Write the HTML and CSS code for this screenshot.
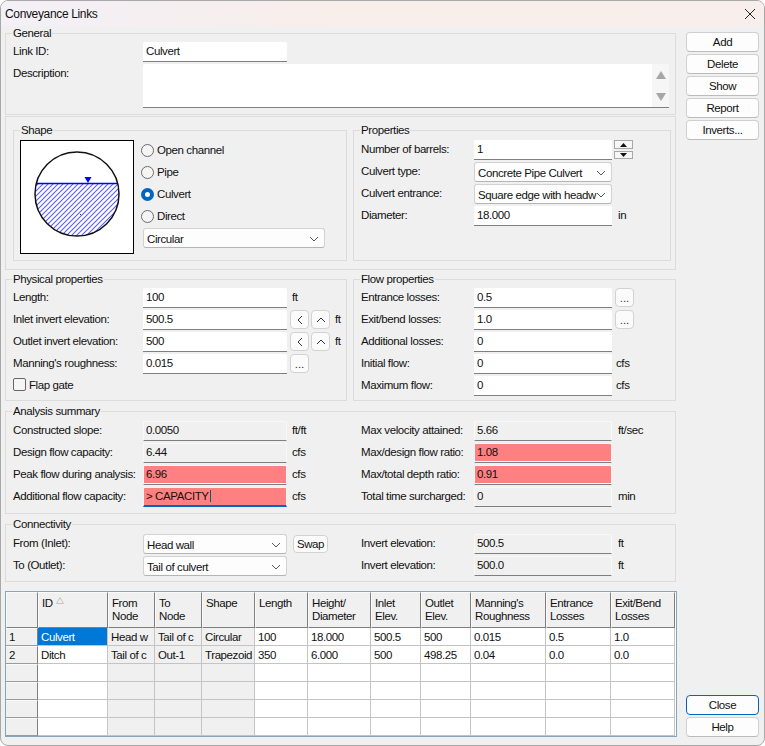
FILE: index.html
```html
<!DOCTYPE html>
<html lang="en">
<head>
<meta charset="utf-8">
<title>Conveyance Links</title>
<link rel="stylesheet" href="styles.css">
</head>
<body>
<div class="window">
  <header class="titlebar">
    <span class="title">Conveyance Links</span>
    <svg class="close-x" width="12" height="12" viewBox="0 0 12 12"><path d="M1 1L11 11M11 1L1 11" stroke="#222" stroke-width="1" fill="none"/></svg>
  </header>
  <div class="content">
    <main class="main">
      <fieldset class="group general">
        <legend>General</legend>
        <div class="row lbl-wide"><span class="label">Link ID:</span><div class="field">Culvert</div></div>
        <div class="row lbl-wide"><span class="label">Description:</span>
          <div class="field memo">
            <div class="memo-scroll">
              <svg width="10" height="8" viewBox="0 0 10 8"><path d="M5 0L10 8H0Z" fill="#a6a6a6"/></svg>
              <svg width="10" height="8" viewBox="0 0 10 8"><path d="M0 0H10L5 8Z" fill="#a6a6a6"/></svg>
            </div>
          </div>
        </div>
      </fieldset>

      <div class="frame">
        <fieldset class="group shape">
          <legend>Shape</legend>
          <div class="shape-body">
            <div class="figure">
              <svg width="112" height="112" viewBox="0 0 112 112">
                <defs>
                  <pattern id="hatch" patternUnits="userSpaceOnUse" width="5" height="5">
                    <path d="M-1 1L1 -1M0 5L5 0M4 6L6 4" stroke="#5a5aff" stroke-width="1.1" fill="none"/>
                  </pattern>
                </defs>
                <path d="M15.3 42.5H96.7A42 42 0 1 1 15.3 42.5Z" fill="url(#hatch)"/>
                <path d="M15 42.5H97" stroke="#0000ff" stroke-width="1.5" fill="none"/>
                <path d="M63.5 36H70.5L67 42Z" fill="#0000ff"/>
                <rect x="59" y="73" width="1" height="1" fill="#333"/>
                <circle cx="56" cy="53" r="42" fill="none" stroke="#111" stroke-width="1.5"/>
              </svg>
            </div>
            <div class="shape-options">
              <div class="radio-row"><span class="radio"></span><span>Open channel</span></div>
              <div class="radio-row"><span class="radio"></span><span>Pipe</span></div>
              <div class="radio-row"><span class="radio checked"></span><span>Culvert</span></div>
              <div class="radio-row"><span class="radio"></span><span>Direct</span></div>
              <div class="select select-shape"><span>Circular</span><svg class="chev" width="10" height="6" viewBox="0 0 10 6"><path d="M1 1L5 5L9 1" stroke="#555" fill="none"/></svg></div>
            </div>
          </div>
        </fieldset>
        <fieldset class="group properties">
          <legend>Properties</legend>
          <div class="row lbl-narrow"><span class="label">Number of barrels:</span><div class="field f-narrow">1</div>
            <div class="spinner">
              <span class="spin spin-up"><svg width="7" height="4" viewBox="0 0 7 4"><path d="M3.5 0L7 4H0Z" fill="#111"/></svg></span>
              <span class="spin spin-down"><svg width="7" height="4" viewBox="0 0 7 4"><path d="M0 0H7L3.5 4Z" fill="#111"/></svg></span>
            </div>
          </div>
          <div class="row lbl-narrow"><span class="label">Culvert type:</span><div class="select f-narrow"><span>Concrete Pipe Culvert</span><svg class="chev" width="10" height="6" viewBox="0 0 10 6"><path d="M1 1L5 5L9 1" stroke="#555" fill="none"/></svg></div></div>
          <div class="row lbl-narrow"><span class="label">Culvert entrance:</span><div class="select f-narrow"><span>Square edge with headw</span><svg class="chev" width="10" height="6" viewBox="0 0 10 6"><path d="M1 1L5 5L9 1" stroke="#555" fill="none"/></svg></div></div>
          <div class="row lbl-narrow"><span class="label">Diameter:</span><div class="field f-narrow">18.000</div><span class="unit unit-far">in</span></div>
        </fieldset>
      </div>

      <div class="pair">
        <fieldset class="group physical">
          <legend>Physical properties</legend>
          <div class="row lbl-wide"><span class="label">Length:</span><div class="field">100</div><span class="unit">ft</span></div>
          <div class="row lbl-wide"><span class="label">Inlet invert elevation:</span><div class="field">500.5</div>
            <button class="btn-mini first"><svg width="8" height="10" viewBox="0 0 8 10"><path d="M6 1L2 5L6 9" stroke="#333" fill="none"/></svg></button>
            <button class="btn-mini"><svg width="10" height="8" viewBox="0 0 10 8"><path d="M1 6L5 2L9 6" stroke="#333" fill="none"/></svg></button>
            <span class="unit">ft</span></div>
          <div class="row lbl-wide"><span class="label">Outlet invert elevation:</span><div class="field">500</div>
            <button class="btn-mini first"><svg width="8" height="10" viewBox="0 0 8 10"><path d="M6 1L2 5L6 9" stroke="#333" fill="none"/></svg></button>
            <button class="btn-mini"><svg width="10" height="8" viewBox="0 0 10 8"><path d="M1 6L5 2L9 6" stroke="#333" fill="none"/></svg></button>
            <span class="unit">ft</span></div>
          <div class="row lbl-wide"><span class="label">Manning's roughness:</span><div class="field">0.015</div><button class="btn-mini first">...</button></div>
          <div class="check-row"><span class="check"></span><span>Flap gate</span></div>
        </fieldset>
        <fieldset class="group flow">
          <legend>Flow properties</legend>
          <div class="row lbl-narrow"><span class="label">Entrance losses:</span><div class="field f-narrow">0.5</div><button class="btn-mini first">...</button></div>
          <div class="row lbl-narrow"><span class="label">Exit/bend losses:</span><div class="field f-narrow">1.0</div><button class="btn-mini first">...</button></div>
          <div class="row lbl-narrow"><span class="label">Additional losses:</span><div class="field f-narrow">0</div></div>
          <div class="row lbl-narrow"><span class="label">Initial flow:</span><div class="field f-narrow">0</div><span class="unit unit-near">cfs</span></div>
          <div class="row lbl-narrow"><span class="label">Maximum flow:</span><div class="field f-narrow">0</div><span class="unit unit-near">cfs</span></div>
        </fieldset>
      </div>

      <fieldset class="group analysis">
        <legend>Analysis summary</legend>
        <div class="two-col">
          <div class="row lbl-wide"><span class="label">Constructed slope:</span><div class="field readonly">0.0050</div><span class="unit">ft/ft</span></div>
          <div class="row lbl-narrow"><span class="label">Max velocity attained:</span><div class="field readonly f-narrow">5.66</div><span class="unit unit-far">ft/sec</span></div>
          <div class="row lbl-wide"><span class="label">Design flow capacity:</span><div class="field readonly">6.44</div><span class="unit">cfs</span></div>
          <div class="row lbl-narrow"><span class="label">Max/design flow ratio:</span><div class="field alert f-narrow">1.08</div></div>
          <div class="row lbl-wide"><span class="label">Peak flow during analysis:</span><div class="field alert">6.96</div><span class="unit">cfs</span></div>
          <div class="row lbl-narrow"><span class="label">Max/total depth ratio:</span><div class="field alert f-narrow">0.91</div></div>
          <div class="row lbl-wide"><span class="label">Additional flow capacity:</span><div class="field alert focused"><span class="caret">&gt; CAPACITY</span></div><span class="unit">cfs</span></div>
          <div class="row lbl-narrow"><span class="label">Total time surcharged:</span><div class="field readonly f-narrow">0</div><span class="unit unit-far">min</span></div>
        </div>
      </fieldset>

      <fieldset class="group connectivity">
        <legend>Connectivity</legend>
        <div class="two-col">
          <div class="row lbl-wide"><span class="label">From (Inlet):</span><div class="select"><span>Head wall</span><svg class="chev" width="10" height="6" viewBox="0 0 10 6"><path d="M1 1L5 5L9 1" stroke="#555" fill="none"/></svg></div><button class="btn-swap">Swap</button></div>
          <div class="row lbl-narrow"><span class="label">Invert elevation:</span><div class="field readonly f-narrow">500.5</div><span class="unit unit-far">ft</span></div>
          <div class="row lbl-wide"><span class="label">To (Outlet):</span><div class="select"><span>Tail of culvert</span><svg class="chev" width="10" height="6" viewBox="0 0 10 6"><path d="M1 1L5 5L9 1" stroke="#555" fill="none"/></svg></div></div>
          <div class="row lbl-narrow"><span class="label">Invert elevation:</span><div class="field readonly f-narrow">500.0</div><span class="unit unit-far">ft</span></div>
        </div>
      </fieldset>

      <div class="grid">
        <table>
          <colgroup>
            <col class="c32"><col class="c70"><col class="c47"><col class="c47"><col class="c53"><col class="c53"><col class="c63"><col class="c50"><col class="c50"><col class="c75"><col class="c65"><col class="c64">
          </colgroup>
          <thead>
            <tr>
              <th></th>
              <th>ID<svg class="sort" width="8" height="7" viewBox="0 0 8 7"><path d="M4 0.5L7.5 6.5H0.5Z" fill="none" stroke="#c4c4c4"/></svg></th>
              <th>From<br>Node</th><th>To<br>Node</th><th>Shape</th><th>Length</th><th>Height/<br>Diameter</th><th>Inlet<br>Elev.</th><th>Outlet<br>Elev.</th><th>Manning's<br>Roughness</th><th>Entrance<br>Losses</th><th>Exit/Bend<br>Losses</th>
            </tr>
          </thead>
          <tbody>
            <tr><td class="rowhead">1</td><td class="selected">Culvert</td><td class="ro">Head w</td><td class="ro">Tail of c</td><td class="ro">Circular</td><td>100</td><td>18.000</td><td>500.5</td><td>500</td><td>0.015</td><td>0.5</td><td>1.0</td></tr>
            <tr><td class="rowhead">2</td><td>Ditch</td><td class="ro">Tail of c</td><td class="ro">Out-1</td><td class="ro">Trapezoid</td><td>350</td><td>6.000</td><td>500</td><td>498.25</td><td>0.04</td><td>0.0</td><td>0.0</td></tr>
            <tr><td class="rowhead"></td><td></td><td class="ro"></td><td class="ro"></td><td class="ro"></td><td></td><td></td><td></td><td></td><td></td><td></td><td></td></tr>
            <tr><td class="rowhead"></td><td></td><td class="ro"></td><td class="ro"></td><td class="ro"></td><td></td><td></td><td></td><td></td><td></td><td></td><td></td></tr>
            <tr><td class="rowhead"></td><td></td><td class="ro"></td><td class="ro"></td><td class="ro"></td><td></td><td></td><td></td><td></td><td></td><td></td><td></td></tr>
            <tr><td class="rowhead"></td><td></td><td class="ro"></td><td class="ro"></td><td class="ro"></td><td></td><td></td><td></td><td></td><td></td><td></td><td></td></tr>
          </tbody>
        </table>
      </div>
    </main>
    <aside class="side">
      <button class="btn">Add</button>
      <button class="btn">Delete</button>
      <button class="btn">Show</button>
      <button class="btn">Report</button>
      <button class="btn">Inverts...</button>
      <div class="side-spacer"></div>
      <button class="btn default">Close</button>
      <button class="btn">Help</button>
    </aside>
  </div>
</div>
</body>
</html>
```

FILE: styles.css
```css
* { box-sizing: border-box; }
html, body { margin: 0; padding: 0; background: #fff; }
body { font: 11.5px/18px "Liberation Sans", Arial, sans-serif; letter-spacing: -0.4px; color: #111; }

.window {
  width: 765px;
  height: 746px;
  background: #f0f0f0;
  border: 1px solid #a8a8a8;
  border-radius: 8px;
  overflow: hidden;
  display: flex;
  flex-direction: column;
}
.titlebar {
  height: 25px;
  flex: none;
  display: flex;
  align-items: center;
  justify-content: space-between;
  padding: 0 8px 0 4px;
  background: linear-gradient(90deg, #f3f0f7, #f8eeea 45%, #f8eeeb);
}
.title { font-size: 12px; letter-spacing: -0.35px; }
.content {
  flex: 1;
  display: flex;
  gap: 9px;
  padding: 0 5px 8px 4px;
  min-height: 0;
}
.main { width: 672px; flex: none; display: flex; flex-direction: column; }
.side { width: 73px; flex: none; display: flex; flex-direction: column; gap: 2px; padding-top: 6px; }
.side-spacer { flex: 1; }

.btn {
  height: 20px;
  padding: 0;
  font: inherit;
  letter-spacing: inherit;
  line-height: 18px;
  color: #111;
  background: #fdfdfd;
  border: 1px solid #d0d0d0;
  border-bottom-color: #bbb;
  border-radius: 4px;
}
.btn.default { border: 1.5px solid #0067c0; }

.group {
  margin: 0;
  min-width: 0;
  border: 1px solid #dcdcdc;
  padding: 2px 7px 6px;
}
legend {
  padding: 0 1px;
  margin-left: -1px;
  line-height: 14px;
  height: 14px;
}
.general, .frame, .pair, .analysis, .connectivity { width: 671px; }
.general { padding-bottom: 6px; }
.general .row { align-items: flex-start; }

.frame {
  margin-top: 1px;
  border: 1px solid #dcdcdc;
  padding: 6px 4px 8px 7px;
  display: flex;
  gap: 6px;
}
.shape { width: 334px; padding: 2px 6px 6px; }
.shape legend { margin-left: 0; }
.properties { width: 318px; padding-top: 3px; }
.shape-body { display: flex; gap: 7px; }
.figure {
  width: 114px;
  height: 114px;
  margin-top: 1px;
  background: #fff;
  border: 1px solid #000;
}
.figure svg { display: block; }
.shape-options { display: flex; flex-direction: column; }
.radio-row { height: 22px; display: flex; align-items: center; gap: 3px; }
.radio {
  width: 13px;
  height: 13px;
  border: 1px solid #6b6b6b;
  border-radius: 50%;
  background: #f5f5f5;
}
.radio.checked { border: 4px solid #0067c0; background: #fff; }

.pair { margin-top: 2px; display: flex; gap: 6px; }
.physical { width: 342px; }
.flow { width: 323px; padding-bottom: 4px; }

.analysis { margin-top: 3px; padding-top: 3px; }
.connectivity { margin-top: 3px; padding-top: 3px; padding-bottom: 5px; }
.two-col {
  display: grid;
  grid-template-columns: 348px 1fr;
  row-gap: 2px;
}

.row { display: flex; height: 20px; align-items: flex-start; }
.row + .row { margin-top: 2px; }
.two-col .row + .row { margin-top: 0; }
.general .row:nth-child(3) { height: auto; }
.label { flex: none; line-height: 18px; white-space: nowrap; }
.lbl-wide .label { width: 130px; }
.lbl-narrow .label { width: 113px; }

.field {
  flex: none;
  width: 144px;
  height: 20px;
  padding: 0 3px;
  line-height: 18px;
  background: #fff;
  border-bottom: 1px solid #7f7f7f;
  border-radius: 2px 2px 0 0;
  white-space: nowrap;
}
.f-narrow { width: 138px; }
.memo {
  width: 526px;
  height: 44px;
  display: flex;
  justify-content: flex-end;
  padding: 0;
}
.memo-scroll {
  width: 17px;
  background: #f6f6f6;
  display: flex;
  flex-direction: column;
  align-items: center;
  justify-content: space-between;
  padding: 7px 0 6px;
}
.memo-scroll svg { display: block; }
.readonly {
  background: #f0f0f0;
  border: 1px solid #f8f8f8;
  border-bottom: 1px solid #7f7f7f;
  padding: 0 2px;
  line-height: 16px;
}
.alert {
  background: #ff8080;
  border: 1px solid #f6f6f6;
  border-bottom: 1px solid #7f7f7f;
  box-shadow: inset 0 -1px 0 #fff;
  padding: 0 2px;
  line-height: 16px;
}
.focused { border-bottom: 2px solid #0067c0; box-shadow: none; }
.caret { border-right: 1px solid #005f6a; padding-right: 1px; }

.select {
  flex: none;
  width: 144px;
  height: 20px;
  padding: 1px 5px 0 3px;
  display: flex;
  align-items: center;
  justify-content: space-between;
  background: #fdfdfd;
  border: 1px solid #d2d2d2;
  border-bottom-color: #b4b4b4;
  border-radius: 3px;
  white-space: nowrap;
  overflow: hidden;
}
.select span { min-width: 0; }
.select.f-narrow { width: 138px; }
.select.select-shape { width: 182px; margin: 1px 0 0 2px; }
.chev { flex: none; margin-left: 2px; }

.unit { margin-left: 5px; line-height: 18px; white-space: nowrap; }
.unit-far { margin-left: 6px; }
.unit-near { margin-left: 4px; }

.spinner { margin-left: 2px; width: 19px; display: flex; flex-direction: column; gap: 2px; }
.spin {
  display: flex;
  align-items: center;
  justify-content: center;
  background: #f6f6f6;
  border: 1px solid #a8a8a8;
}
.spin-up { height: 9px; }
.spin-down { height: 8px; }

.btn-mini {
  flex: none;
  width: 19px;
  height: 19px;
  margin-left: 2px;
  padding: 0;
  font: inherit;
  line-height: 16px;
  color: #333;
  display: flex;
  align-items: center;
  justify-content: center;
  background: #fbfbfb;
  border: 1px solid #d2d2d2;
  border-radius: 4px;
}
.btn-mini.first { margin-left: 3px; }
.btn-swap {
  flex: none;
  width: 35px;
  height: 18px;
  margin: 1px 0 0 6px;
  padding: 0;
  font: inherit;
  letter-spacing: inherit;
  line-height: 16px;
  color: #111;
  background: #fbfbfb;
  border: 1px solid #d2d2d2;
  border-radius: 4px;
}

.check-row { margin-top: 4px; display: flex; align-items: center; gap: 3px; height: 13px; }
.check {
  width: 13px;
  height: 13px;
  border: 1px solid #666;
  border-radius: 2px;
  background: #f5f5f5;
}

.grid {
  margin-top: 9px;
  width: 672px;
  height: 146px;
  background: #fff;
  border: 1px solid #86a4bc;
  overflow: hidden;
}
table {
  table-layout: fixed;
  width: 669px;
  border-collapse: separate;
  border-spacing: 0;
}
.c32 { width: 32px; } .c47 { width: 47px; } .c50 { width: 50px; } .c53 { width: 53px; }
.c63 { width: 63px; } .c64 { width: 64px; } .c65 { width: 65px; } .c70 { width: 70px; } .c75 { width: 75px; }
th, td {
  padding: 0 0 0 3px;
  white-space: nowrap;
  overflow: hidden;
  font-weight: 400;
  text-align: left;
}
th {
  height: 36px;
  padding-top: 4px;
  line-height: 13px;
  vertical-align: top;
  background: #f0f0f0;
  border-right: 1px solid #7f7f7f;
  border-bottom: 1px solid #7f7f7f;
  border-top: 1px solid #fafafa;
  border-left: 1px solid #fafafa;
}
.sort { margin-left: 3px; vertical-align: 3px; }
td {
  height: 18px;
  padding-top: 1px;
  line-height: 16px;
  vertical-align: top;
  border-right: 1px solid #c4c4c4;
  border-bottom: 1px solid #c4c4c4;
}
td.ro { background: #f0f0f0; }
td.rowhead {
  background: #f0f0f0;
  border-top: 1px solid #fafafa;
  border-right: 1px solid #7f7f7f;
  border-bottom: 1px solid #9a9a9a;
  padding-top: 0;
}
td.selected { background: #0078d7; color: #fff; }
```
